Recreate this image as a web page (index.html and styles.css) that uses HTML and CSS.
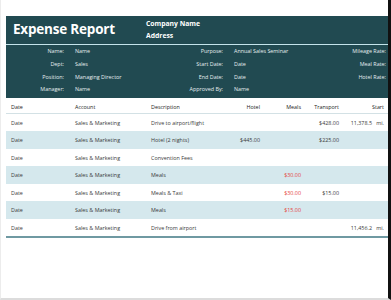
FILE: index.html
```html
<!DOCTYPE html>
<html>
<head>
<meta charset="utf-8">
<link rel="stylesheet" href="styles.css">
</head>
<body>
<div class="frame">
  <div class="report">
    <header class="banner">
      <div class="banner-top">
        <h1 class="title">Expense Report</h1>
        <div class="company">
          <div>Company Name</div>
          <div>Address</div>
        </div>
      </div>
      <div class="details">
        <span class="lbl">Name:</span><span class="val">Name</span>
        <span class="lbl">Purpose:</span><span class="val">Annual Sales Seminar</span>
        <span class="lbl">Mileage Rate:</span>
        <span class="lbl">Dept:</span><span class="val">Sales</span>
        <span class="lbl">Start Date:</span><span class="val">Date</span>
        <span class="lbl">Meal Rate:</span>
        <span class="lbl">Position:</span><span class="val">Managing Director</span>
        <span class="lbl">End Date:</span><span class="val">Date</span>
        <span class="lbl">Hotel Rate:</span>
        <span class="lbl">Manager:</span><span class="val">Name</span>
        <span class="lbl">Approved By:</span><span class="val">Name</span>
        <span class="lbl"></span>
      </div>
    </header>
    <div class="table">
      <div class="row head">
        <span class="c-date">Date</span><span>Account</span><span>Description</span>
        <span class="num">Hotel</span><span class="num">Meals</span><span class="num">Transport</span><span class="num">Start</span>
      </div>
      <div class="row">
        <span class="c-date">Date</span><span>Sales &amp; Marketing</span><span>Drive to airport/flight</span>
        <span class="num"></span><span class="num"></span><span class="num">$428.00</span><span class="num">11,378.5&nbsp;&nbsp;&nbsp;mi.</span>
      </div>
      <div class="row alt">
        <span class="c-date">Date</span><span>Sales &amp; Marketing</span><span>Hotel (2 nights)</span>
        <span class="num">$445.00</span><span class="num"></span><span class="num">$225.00</span><span class="num"></span>
      </div>
      <div class="row">
        <span class="c-date">Date</span><span>Sales &amp; Marketing</span><span>Convention Fees</span>
        <span class="num"></span><span class="num"></span><span class="num"></span><span class="num"></span>
      </div>
      <div class="row alt">
        <span class="c-date">Date</span><span>Sales &amp; Marketing</span><span>Meals</span>
        <span class="num"></span><span class="num red">$30.00</span><span class="num"></span><span class="num"></span>
      </div>
      <div class="row">
        <span class="c-date">Date</span><span>Sales &amp; Marketing</span><span>Meals &amp; Taxi</span>
        <span class="num"></span><span class="num red">$30.00</span><span class="num">$15.00</span><span class="num"></span>
      </div>
      <div class="row alt">
        <span class="c-date">Date</span><span>Sales &amp; Marketing</span><span>Meals</span>
        <span class="num"></span><span class="num red">$15.00</span><span class="num"></span><span class="num"></span>
      </div>
      <div class="row last">
        <span class="c-date">Date</span><span>Sales &amp; Marketing</span><span>Drive from airport</span>
        <span class="num"></span><span class="num"></span><span class="num"></span><span class="num">11,456.2&nbsp;&nbsp;&nbsp;mi.</span>
      </div>
    </div>
  </div>
</div>
</body>
</html>
```

FILE: styles.css
```css
html, body {
  margin: 0;
  padding: 0;
  background: #ffffff;
}
body {
  font-family: "Open Sans", "Noto Sans", sans-serif;
  color: #3a3a3a;
}
.frame {
  height: 300px;
  box-sizing: border-box;
  padding: 16px 0 0 5px;
  border-left: 1px solid #ececec;
  border-right: 3px solid #111111;
  border-bottom: 2px solid #dcdcdc;
}
.report {
  width: 382px;
}
.banner {
  background: #214a51;
  color: #ffffff;
  padding-bottom: 2px;
}
.banner-top {
  height: 28px;
  display: grid;
  grid-template-columns: 140px 1fr;
  align-items: center;
  border-bottom: 1px solid #c4e4eb;
}
.title {
  margin: 0;
  padding-left: 7px;
  font-size: 13.5px;
  font-weight: 700;
  letter-spacing: -0.2px;
  line-height: 1;
}
.company {
  font-size: 6.8px;
  font-weight: 700;
  line-height: 12px;
}
.details {
  display: grid;
  grid-template-columns: 58px 65px 72px 1fr 66px;
  column-gap: 11px;
  grid-auto-rows: 12.7px;
  align-items: center;
  font-size: 5.4px;
  color: #e6eef0;
  padding-right: 2px;
}
.details .lbl {
  text-align: right;
}
.table {
  font-size: 5.4px;
}
.row {
  display: grid;
  grid-template-columns: 69px 76px 70px 39px 41px 38px 1fr;
  height: 17.5px;
  align-items: center;
}
.row > span {
  white-space: nowrap;
}
.row .num {
  text-align: right;
}
.row .num:last-child {
  padding-right: 4px;
}
.c-date {
  padding-left: 5px;
}
.row.head {
  height: 16px;
  box-sizing: border-box;
  padding-top: 4px;
  border-bottom: 1px solid #d3e1e5;
  color: #222222;
}
.row.alt {
  background: #d5e8ed;
}
.row.last {
  border-bottom: 2px solid #6f99a2;
}
.red {
  color: #e5423c;
}
```
